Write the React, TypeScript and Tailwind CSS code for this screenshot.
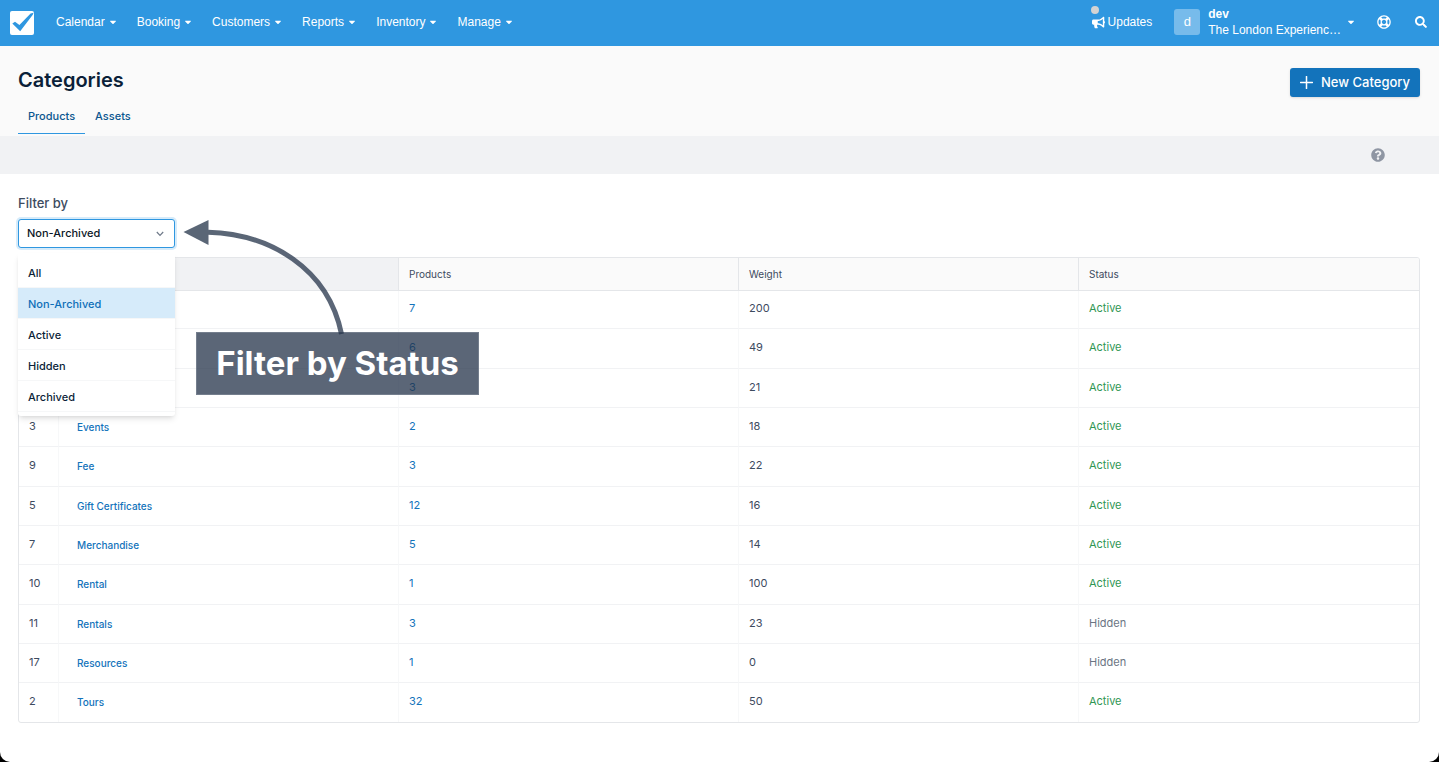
import React, { useState } from 'react';
import { FaBullhorn, FaCaretDown, FaQuestionCircle, FaRegLifeRing, FaSearch } from 'react-icons/fa';

interface Category {
  id?: number;
  name?: string;
  products: number;
  weight: number;
  status: 'Active' | 'Hidden';
}

const NAV_ITEMS = ['Calendar', 'Booking', 'Customers', 'Reports', 'Inventory', 'Manage'];

const FILTER_OPTIONS = ['All', 'Non-Archived', 'Active', 'Hidden', 'Archived'];

const CATEGORIES: Category[] = [
  { products: 7, weight: 200, status: 'Active' },
  { products: 6, weight: 49, status: 'Active' },
  { products: 3, weight: 21, status: 'Active' },
  { id: 3, name: 'Events', products: 2, weight: 18, status: 'Active' },
  { id: 9, name: 'Fee', products: 3, weight: 22, status: 'Active' },
  { id: 5, name: 'Gift Certificates', products: 12, weight: 16, status: 'Active' },
  { id: 7, name: 'Merchandise', products: 5, weight: 14, status: 'Active' },
  { id: 10, name: 'Rental', products: 1, weight: 100, status: 'Active' },
  { id: 11, name: 'Rentals', products: 3, weight: 23, status: 'Hidden' },
  { id: 17, name: 'Resources', products: 1, weight: 0, status: 'Hidden' },
  { id: 2, name: 'Tours', products: 32, weight: 50, status: 'Active' },
];

function Logo() {
  return (
    <svg viewBox="0 0 24 24" className="h-6 w-6" aria-hidden="true">
      <rect width="24" height="24" rx="2" fill="#fff" />
      <path d="M2.3 12.6 5 10.8 9.4 14 20.6 2.6 23.6 1.8 22.6 4 10.2 20.2Z" fill="#2f97e0" />
    </svg>
  );
}

function TopNav() {
  return (
    <header className="flex h-[46px] items-center bg-[#2f97e0] pl-2.5 pr-3 font-['Liberation_Sans',Arial,sans-serif] text-xs text-white">
      <a href="#" aria-label="Home">
        <Logo />
      </a>
      <nav className="ml-3 flex flex-1 pb-0.5">
        {NAV_ITEMS.map(item => (
          <button key={item} type="button" className="flex items-center gap-1 px-2.5 py-2">
            {item}
            <FaCaretDown className="h-2.5 w-2" />
          </button>
        ))}
      </nav>
      <div className="flex items-center pb-0.5">
        <a href="#" className="relative mr-[22px] flex items-center gap-[3px]">
          <span className="absolute -top-2 left-[-1px] h-2 w-2 rounded-full bg-[#d3d3d3]" />
          <FaBullhorn className="h-[13px] w-[13px]" />
          Updates
        </a>
        <button type="button" className="mr-[22px] flex items-center text-left">
          <span className="mr-2 flex h-[26px] w-[26px] items-center justify-center rounded-[3px] bg-white/35 text-[13px]">
            d
          </span>
          <span className="mr-1.5 leading-4">
            <span className="block font-bold">dev</span>
            <span className="block">The London Experienc…</span>
          </span>
          <FaCaretDown className="h-2.5 w-2" />
        </button>
        <button type="button" aria-label="Help" className="mr-6">
          <FaRegLifeRing className="h-3.5 w-3.5" />
        </button>
        <button type="button" aria-label="Search">
          <FaSearch className="h-3 w-3" />
        </button>
      </div>
    </header>
  );
}

function PageHeader() {
  return (
    <div className="flex items-start justify-between bg-[#fafafa] pb-0.5 pl-[18px] pr-[19px] pt-[22px]">
      <div>
        <h1 className="text-xl font-semibold leading-6 text-[#0b1f38]">Categories</h1>
        <div className="mt-3.5 flex text-[11px] font-medium leading-4 text-[#0b568f]">
          <a href="#" className="border-b border-[#2f97e0] px-2.5 pb-[9px] pt-0.5">
            Products
          </a>
          <a href="#" className="px-2.5 pb-[9px] pt-0.5">
            Assets
          </a>
        </div>
      </div>
      <button
        type="button"
        className="flex h-[29px] items-center gap-2 rounded-[3px] bg-[#1373bb] px-2.5 text-[13px] font-medium text-white shadow"
      >
        <svg viewBox="0 0 13 13" className="h-[13px] w-[13px]" aria-hidden="true">
          <path d="M6.5 0.5v12M0.5 6.5h12" stroke="currentColor" strokeWidth="1.5" strokeLinecap="round" />
        </svg>
        New Category
      </button>
    </div>
  );
}

interface StatusFilterProps {
  value: string;
  onChange: (value: string) => void;
}

function StatusFilter({ value, onChange }: StatusFilterProps) {
  return (
    <div className="relative w-[157px]">
      <label htmlFor="status-filter" className="block text-[13px] font-medium leading-5 text-[#3d4b5f]">
        Filter by
      </label>
      <div className="relative mt-1.5">
        <select
          id="status-filter"
          value={value}
          onChange={e => onChange(e.target.value)}
          className="block h-[29px] w-full appearance-none rounded-[3px] border border-[#2f97e0] bg-white pl-2 pr-7 text-[11px] font-medium text-[#0b1626] outline-none ring-2 ring-[#d6ebfa]"
        >
          {FILTER_OPTIONS.map(option => (
            <option key={option}>{option}</option>
          ))}
        </select>
        <svg viewBox="0 0 8 6" className="pointer-events-none absolute right-[11px] top-3 h-1.5 w-2" aria-hidden="true">
          <path d="M0.8 1 4 4.4 7.2 1" fill="none" stroke="#6f7a89" strokeWidth="1.2" />
        </svg>
      </div>
      <ul className="absolute inset-x-0 top-full z-10 mt-[5px] rounded-[3px] bg-white py-1 text-[11px] font-medium text-[#0b1f38] shadow-md">
        {FILTER_OPTIONS.map(option => (
          <li key={option}>
            <button
              type="button"
              onClick={() => onChange(option)}
              className={`block h-[31px] w-full border-b border-[#f6f7f8] px-2.5 pt-0.5 text-left ${
                option === value ? 'bg-[#d6ebfa] text-[#0f6fb8]' : ''
              }`}
            >
              {option}
            </button>
          </li>
        ))}
      </ul>
    </div>
  );
}

// Annotation that points at the status filter
function Callout() {
  return (
    <div className="pointer-events-none absolute left-[183px] top-[46px] z-20">
      <svg viewBox="0 0 164 116" className="h-[116px] w-[164px]" aria-hidden="true">
        <g opacity="0.75">
          <path d="M0.5 12 25.5 0v25Z" fill="#243349" />
          <path d="M25 12.2C87 14 145 48 158.5 114" fill="none" stroke="#243349" strokeWidth="5" />
        </g>
      </svg>
      <div className="-mt-1 ml-[13px] flex h-[63px] w-[283px] items-center justify-center border border-[#8e96a3]/50 bg-[#243349]/75 text-[33px] font-bold text-white">
        Filter by Status
      </div>
    </div>
  );
}

function CategoryTable() {
  const headClass = 'border-b border-r border-[#e4e6e9] px-2.5 text-left font-normal last:border-r-0';
  const cellClass = 'border-b border-r border-[#f1f2f4] border-r-[#f7f8f9] px-2.5 last:border-r-0 group-last:border-b-0';

  return (
    <div className="mt-[9px] overflow-hidden rounded-[3px] border border-[#e4e6e9]">
      <table className="w-full table-fixed border-separate border-spacing-0 text-[11px] text-[#3d4b5f]">
        <thead>
          <tr className="h-[33px] bg-[#fafafa] text-[10px]">
            <th className="w-10 border-b border-[#e4e6e9] bg-[#f1f2f4]" />
            <th className={`${headClass} bg-[#f1f2f4]`} />
            <th className={headClass}>Products</th>
            <th className={headClass}>Weight</th>
            <th className={headClass}>Status</th>
          </tr>
        </thead>
        <tbody>
          {CATEGORIES.map((category, index) => (
            <tr key={index} className="group h-[39px] first:h-[38px] [&:nth-child(3n+2)]:h-10 last:h-[39px]!">
              <td className={`${cellClass} pb-0.5`}>{category.id}</td>
              <td className={`${cellClass} pl-[18px] text-[10px] font-medium`}>
                {category.name && (
                  <a href="#" className="text-[#1373bb]">
                    {category.name}
                  </a>
                )}
              </td>
              <td className={`${cellClass} pb-0.5`}>
                <a href="#" className="text-[#1373bb]">
                  {category.products}
                </a>
              </td>
              <td className={`${cellClass} pb-0.5`}>{category.weight}</td>
              <td className={`${cellClass} pb-0.5 ${category.status === 'Active' ? 'text-[#2f9653]' : 'text-[#6b7583]'}`}>
                {category.status}
              </td>
            </tr>
          ))}
        </tbody>
      </table>
    </div>
  );
}

export default function App() {
  const [filter, setFilter] = useState('Non-Archived');

  return (
    <div className="bg-black">
      <div className="min-h-screen overflow-hidden rounded-b-[10px] bg-white font-['Inter',sans-serif]">
        <TopNav />
        <PageHeader />
        <div className="flex h-[38px] items-center justify-end bg-[#f1f2f4] pr-[54px]">
          <button type="button" aria-label="About this page" className="text-[#8f96a3]">
            <FaQuestionCircle className="h-3.5 w-3.5" />
          </button>
        </div>
        <main className="relative pl-[18px] pr-[19px] pt-[19px]">
          <StatusFilter value={filter} onChange={setFilter} />
          <Callout />
          <CategoryTable />
        </main>
      </div>
    </div>
  );
}
